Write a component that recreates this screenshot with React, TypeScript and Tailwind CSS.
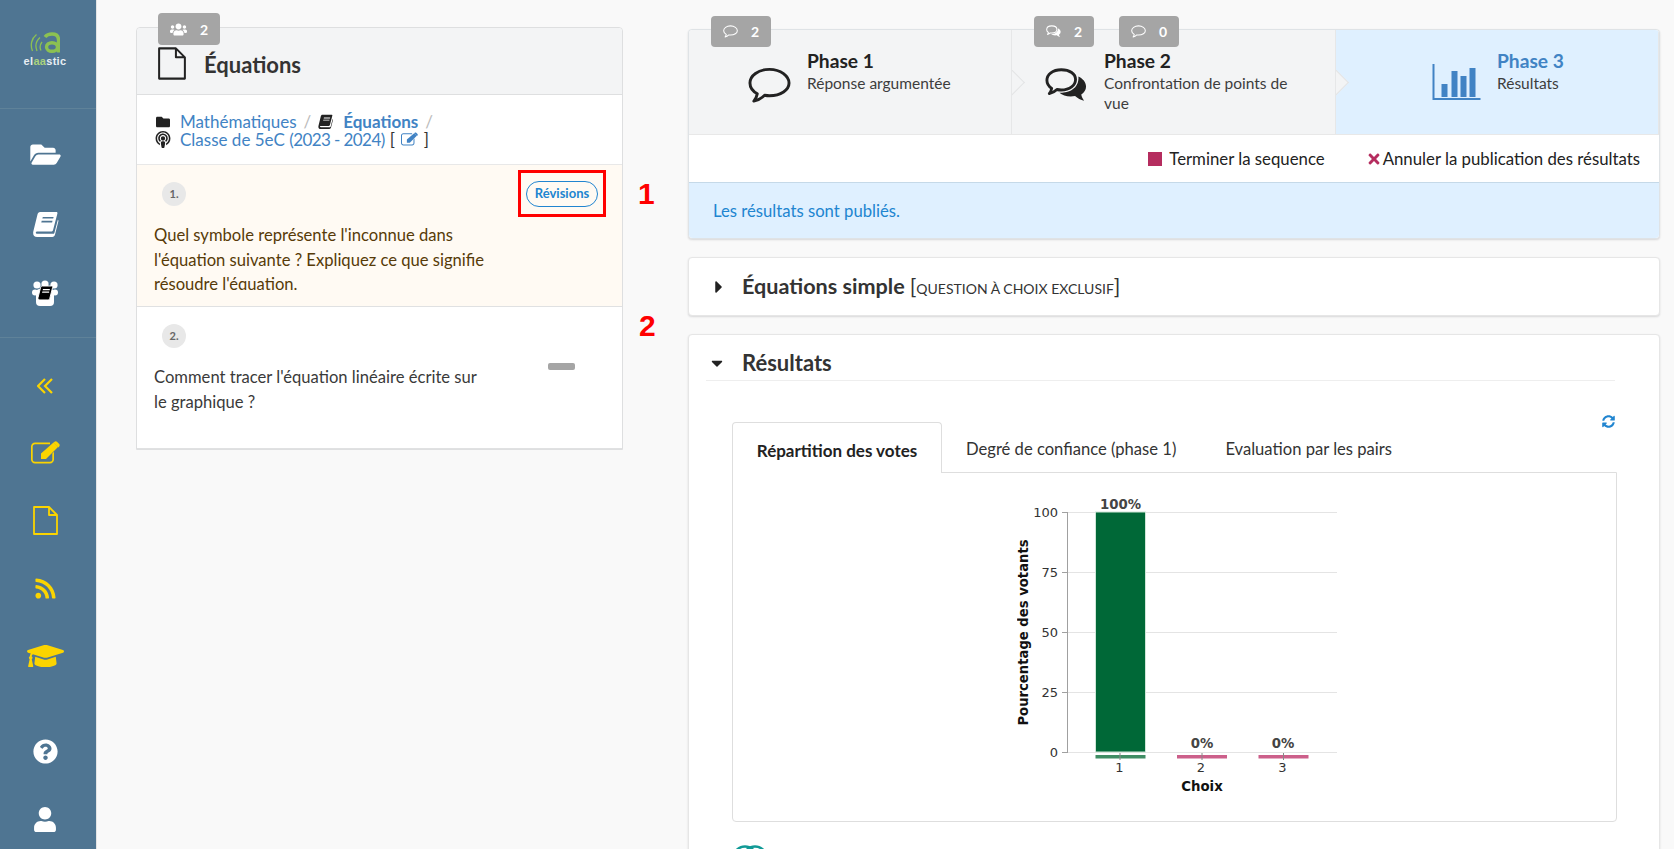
import React from 'react';
import {
  FaCaretDown,
  FaCaretRight,
  FaFolder,
  FaFolderOpen,
  FaGraduationCap,
  FaPodcast,
  FaQuestionCircle,
  FaRss,
  FaSyncAlt,
  FaTimes,
  FaUser,
  FaUsers,
} from 'react-icons/fa';

type IconProps = { className?: string };

const BookIcon = ({ className }: IconProps) => (
  <svg viewBox="0 0 24 24" className={className} fill="currentColor">
    <path d="M7 1h15c.8 0 1.200.6 1 1.300l-4 15.200c-.3 1-1 1.500-2 1.500H4.500c-1 0-1.600.6-1.400 1.200.2.500.8.800 1.600.8H19c.6 0 1-.3 1.200-.8L23.400 8l.6 1-3.200 12.700c-.3 1.200-1.200 2.300-2.600 2.300H4.200C2 24 .5 22.400.6 20.200c0-.6.1-1 .2-1.600L4.600 3.200C4.900 2 5.800 1 7 1zm2.500 4.500-.4 1.500h10l.4-1.500zm-1 3.500-.4 1.500h10l.4-1.500z" fillRule="evenodd" />
  </svg>
);

const FileIcon = ({ className }: IconProps) => (
  <svg viewBox="0 0 25 29" className={className} fill="none" stroke="currentColor" strokeWidth="1.800" strokeLinejoin="round">
    <path d="M1 1h15l8 8v19H1zM16 1v8h8" />
  </svg>
);

const EditIcon = ({ className }: IconProps) => (
  <svg viewBox="0 0 29 23" className={className} fill="currentColor">
    <path d="M4 1.500h15v1.700H4C2.700 3.200 1.700 4.200 1.700 5.500v13c0 1.300 1 2.300 2.300 2.300h15c1.300 0 2.300-1 2.300-2.300v-6l1.700-1.700v7.700c0 2.200-1.800 4-4 4H4c-2.200 0-4-1.800-4-4v-13c0-2.200 1.800-4 4-4z" />
    <path d="M10 12.500 22.500 1.500l4.500 4.500-12 12h-5z" />
    <path d="M23.500.8c.8-.7 1.800-.7 2.500 0l2.200 2.200c.7.700.7 1.700 0 2.400l-1 1-4.700-4.600z" />
  </svg>
);

const CommentIcon = ({ className }: IconProps) => (
  <svg viewBox="0 0 44 37" className={className} fill="none" stroke="currentColor" strokeWidth="3" strokeLinejoin="round">
    <path d="M22 2C10.400 2 2 8.500 2 16c0 4.500 3 8.500 7.500 11-.4 2.500-1.500 5-3.500 7.500 4-.8 8-3 11-6 1.600.3 3.300.5 5 .5 11.600 0 20-6 20-13S33.600 2 22 2z" />
  </svg>
);

const CommentsIcon = ({ className }: IconProps) => (
  <svg viewBox="0 0 44 37" className={className}>
    <path d="M17 2C8 2 2 7 2 13c0 3.500 2 6.500 5 8.500-.3 2-1 3.500-2.500 5.500 3-.6 6-2.300 8-4.300 1.400.3 3 .5 4.500.5 9 0 15-5 15-11S26 2 17 2z" fill="none" stroke="currentColor" strokeWidth="3" strokeLinejoin="round" />
    <path d="M35 9c4.500 2 8 6 8 10.500 0 3.500-2 6.500-5 8.500.3 2 1.200 4 3 6.500-3.500-.6-7-2.800-9.500-5-1.600.3-3 .5-4.500.5-5 0-9-1.500-12-4 8 .5 21-3 20-17z" fill="currentColor" />
  </svg>
);

const DoubleLeft = ({ className }: IconProps) => (
  <svg viewBox="0 0 16 16" className={className} fill="none" stroke="currentColor" strokeWidth="2.200">
    <path d="M8 1 1 8l7 7M15 1 8 8l7 7" />
  </svg>
);

const TeamIcon = () => (
  <svg viewBox="0 0 26 26" className="w-[26px] h-[26px]">
    <g fill="#fff">
      <circle cx="5" cy="5" r="3.600" />
      <circle cx="13" cy="4" r="3.600" />
      <circle cx="22" cy="5" r="3.600" />
      <rect x="0" y="9.500" width="6" height="6" rx="3" />
      <rect x="20" y="9.500" width="6" height="6" rx="3" />
      <rect x="4" y="9" width="18" height="17" rx="4" />
    </g>
    <g transform="translate(6 6) scale(0.62)">
      <path d="M7 0h15c1.500 0 2 1 1.600 2.300L19 20c-.4 1.500-1.500 2.500-3 2.500H3c-2 0-3.500-1.500-3-3.500L4 3C4.500 1.200 5.500 0 7 0z" fill="#000" stroke="#fff" strokeWidth="1.500" />
      <path d="M8 5h11v2H7.500zM7 9h11v2H6.500z" fill="#fff" />
    </g>
  </svg>
);

const Badge = ({ icon, count, className }: { icon: React.ReactNode; count: number; className: string }) => (
  <div className={`absolute z-10 rounded-[4px] bg-[#a5a5a5] text-white text-[14px] font-bold flex items-center justify-center gap-[13px] ${className}`}>
    {icon}
    <span>{count}</span>
  </div>
);

const NavItem = ({ children, h }: { children: React.ReactNode; h: string }) => (
  <div className={`flex items-center justify-center shrink-0 ${h}`}>{children}</div>
);

const Sidebar = () => (
  <div className="w-[97px] shrink-0 h-full bg-[#4f7592] border-r border-[#e4e4e4] flex flex-col overflow-hidden pr-[6px]">
    <div className="-mr-[6px] pr-[6px] h-[109px] shrink-0 border-b border-[#5f8299] flex flex-col items-center pt-[32px]">
      <svg viewBox="0 0 30 22" className="w-[30px] h-[22px]" fill="none" stroke="#8cc152">
        <path d="M7 19C5 14 6 9 10 5.500M2.500 19C0 13 1.500 6.500 6.500 2.500M11 18.500c-1.500-3-1-6 1-8.500" strokeWidth="1.300" />
        <path d="M15 5C16.500 3 18.500 2 22 2c4.500 0 6.500 2.500 6.500 6v12.500" strokeWidth="3.400" />
        <ellipse cx="22" cy="15" rx="5.500" ry="4.300" strokeWidth="3.400" />
      </svg>
      <div className="mt-[1px] text-[11px] font-bold leading-[12px] tracking-[0.3px] text-[#e8eef2] font-['Liberation_Sans',sans-serif]">
        el<span className="text-[#a9d27d]">aa</span>stic
      </div>
    </div>
    <div className="-mr-[6px] pr-[6px] h-[229px] shrink-0 border-b border-[#5f8299] flex flex-col pt-[20px] text-white">
      <NavItem h="h-[50px]"><FaFolderOpen className="w-[31px] h-[27px]" /></NavItem>
      <NavItem h="h-[89px]"><BookIcon className="w-[27px] h-[26px]" /></NavItem>
      <NavItem h="h-[50px]"><TeamIcon /></NavItem>
    </div>
    <div className="flex flex-col shrink-0 pt-[16px] text-[#fbd400]">
      <NavItem h="h-[64px]"><DoubleLeft className="w-[16px] h-[16px]" /></NavItem>
      <NavItem h="h-[68px]"><EditIcon className="w-[29px] h-[23px]" /></NavItem>
      <NavItem h="h-[68px]"><FileIcon className="w-[25px] h-[29px]" /></NavItem>
      <NavItem h="h-[68px]"><FaRss className="w-[23px] h-[23px]" /></NavItem>
      <NavItem h="h-[68px]"><FaGraduationCap className="w-[37px] h-[30px]" /></NavItem>
    </div>
    <div className="flex flex-col shrink-0 pt-[27px] text-white">
      <NavItem h="h-[68px]"><FaQuestionCircle className="w-[25px] h-[25px]" /></NavItem>
      <NavItem h="h-[68px]"><FaUser className="w-[22px] h-[25px]" /></NavItem>
    </div>
  </div>
);

const Question = ({ n, text, active }: { n: number; text: React.ReactNode; active?: boolean }) => (
  <div className={`h-[142px] border-b border-[#e0e1e2] pl-[17px] ${active ? 'bg-[#fffaf3] text-[#573a08]' : 'bg-white text-[#3a3a3a]'}`}>
    <div className="ml-[8px] pt-[17px]">
      <div className="w-[24px] h-[24px] rounded-full bg-[#e8e8e8] text-[#666] text-[11px] font-bold flex items-center justify-center">{n}.</div>
    </div>
    <div className="mt-[17px] w-[335px] h-[67px] overflow-hidden text-[16.600px] leading-[24.500px]">{text}</div>
  </div>
);

const LeftColumn = () => (
  <div className="relative w-[487px] shrink-0">
    <div className="relative rounded-t-[4px] border border-[#dedfe0] bg-white">
      <Badge icon={<FaUsers className="w-[17px] h-[15px]" />} count={2} className="left-[21px] top-[-15px] h-[32px] w-[62px]" />
      <div className="h-[67px] bg-[#f3f4f5] rounded-t-[4px] border-b border-[#dedfe0] flex items-center pl-[21px] pt-[4px]">
        <FileIcon className="w-[28px] h-[33px] text-[#222]" />
        <span className="ml-[18px] mt-[3px] text-[22px] font-bold text-[#333]">Équations</span>
      </div>
      <div className="h-[70px] border-b border-[#e8e8e8] pt-[18px] pl-[18px] text-[17px] leading-[17.500px] text-[#4183c4]">
        <div className="flex items-center">
          <FaFolder className="w-[16px] h-[14px] text-[#222] mr-[9px]" />
          <span>Mathématiques</span>
          <span className="text-[#bbb] mx-[7px]">/</span>
          <BookIcon className="w-[15px] h-[15px] text-[#222] mr-[10px]" />
          <span className="font-bold">Équations</span>
          <span className="text-[#bbb] ml-[7px]">/</span>
        </div>
        <div className="flex items-center">
          <FaPodcast className="w-[16px] h-[17px] text-[#222] mr-[9px]" />
          <span>Classe de 5eC <span className="tracking-[-0.58px]">(2023 - 2024)</span></span>
          <span className="text-[#333] ml-[5px]">[</span>
          <EditIcon className="w-[17px] h-[14px] mx-[6px]" />
          <span className="text-[#333]">]</span>
        </div>
      </div>
      <Question active n={1} text={<>Quel symbole représente l'inconnue dans l'équation suivante ? Expliquez ce que signifie résoudre l'équation.</>} />
      <Question n={2} text={<>Comment tracer l'équation linéaire écrite sur le graphique ?</>} />
      <div className="absolute left-[381px] top-[142px] w-[88px] h-[47px] border-[3px] border-[#ff0000] flex items-center justify-center">
        <div className="w-[72px] h-[26px] rounded-full border border-[#2185d0] text-[#2185d0] text-[13px] font-bold flex items-center justify-center">Révisions</div>
      </div>
      <div className="absolute left-[411px] top-[335px] w-[27px] h-[7px] rounded-[2px] bg-[#a5a5a5]" />
      <div className="absolute left-[501px] top-[151px] text-[#ff0000] text-[30px] leading-none font-bold font-['Liberation_Sans',sans-serif]">1</div>
      <div className="absolute left-[502px] top-[283px] text-[#ff0000] text-[30px] leading-none font-bold font-['Liberation_Sans',sans-serif]">2</div>
    </div>
  </div>
);

const Step = ({ title, sub, icon, active, w }: { title: string; sub: string; icon: React.ReactNode; active?: boolean; w: string }) => (
  <div className={`relative h-[104px] ${w} flex pt-[20px] border-r border-[#e6e7e8] ${active ? 'bg-[#dff0ff]' : 'bg-[#f3f4f5]'}`}>
    {icon}
    <div className="w-[190px]">
      <div className={`text-[19.200px] leading-[22px] font-bold ${active ? 'text-[#4183c4]' : 'text-[#222]'}`}>{title}</div>
      <div className="text-[15.500px] leading-[20px] mt-[1px] text-[#3d3d3d]">{sub}</div>
    </div>
  </div>
);

const Chevron = ({ className }: { className: string }) => (
  <div className={`absolute top-[39px] w-[14px] h-[27px] overflow-hidden ${className}`}>
    <div className="w-[19px] h-[19px] -ml-[10px] mt-[4px] rotate-45 bg-[#f3f4f5] border-t border-r border-[#e3e4e5]" />
  </div>
);

const Steps = () => (
  <div className="relative rounded-[4px] border border-[#dfe3e6] shadow-[0_1px_2px_rgba(34,36,38,0.15)] bg-white">
    <Badge icon={<CommentIcon className="w-[15px] h-[13px]" />} count={2} className="left-[22px] top-[-14px] h-[31px] w-[60px]" />
    <Badge icon={<CommentsIcon className="w-[15px] h-[13px]" />} count={2} className="left-[345px] top-[-14px] h-[31px] w-[60px]" />
    <Badge icon={<CommentIcon className="w-[15px] h-[13px]" />} count={0} className="left-[430px] top-[-14px] h-[31px] w-[60px]" />
    <div className="flex rounded-t-[4px] overflow-hidden">
      <Step w="w-[323px] shrink-0" title="Phase 1" sub="Réponse argumentée" icon={<CommentIcon className="w-[43px] h-[37px] ml-[59px] mr-[16px] mt-[17px] text-[#222] shrink-0" />} />
      <Step w="w-[324px] shrink-0" title="Phase 2" sub="Confrontation de points de vue" icon={<CommentsIcon className="w-[42px] h-[37px] ml-[33px] mr-[17px] mt-[17px] text-[#222] shrink-0" />} />
      <Step active w="flex-1 min-w-0" title="Phase 3" sub="Résultats" icon={
        <svg viewBox="0 0 48 36" className="w-[49px] h-[36px] ml-[96px] mr-[16px] mt-[14px] shrink-0 text-[#4183c4]" fill="currentColor">
          <path d="M0 0h2v34h46v2H0zM9 20h6v13H9zM19 7h6v26h-6zM28 12h6v21h-6zM37 4h6v29h-6z" />
        </svg>
      } />
    </div>
    <Chevron className="left-[323px]" />
    <Chevron className="left-[647px]" />
    <div className="h-[48px] border-t border-[#e8e8e8] flex items-center justify-end pr-[19px] text-[16.800px] text-[#222]">
      <div className="w-[14px] h-[14px] bg-[#b52d5f] mr-[7px]" />
      <span>Terminer la sequence</span>
      <FaTimes className="w-[14px] h-[16px] text-[#b52d5f] ml-[42px] mr-[2px]" />
      <span>Annuler la publication des résultats</span>
    </div>
    <div className="h-[56px] pt-[3px] border-t border-[#c5d9e8] bg-[#dff0ff] rounded-b-[4px] flex items-center pl-[24px] text-[16.700px] text-[#2185d0]">Les résultats sont publiés.</div>
  </div>
);

const Chart = () => (
  <svg viewBox="0 0 420 330" className="w-[420px] h-[330px] ml-[284px] mt-[17px] font-['DejaVu_Sans',sans-serif]">
    {[0, 60, 120, 180, 240].map((y) => (
      <line key={y} x1="50" x2="320" y1={y + 22.500} y2={y + 22.500} stroke="#e4e4e4" strokeWidth="1" />
    ))}
    <line x1="50.500" x2="50.500" y1="22" y2="263" stroke="#a0a0a0" />
    {[0, 60, 120, 180, 240].map((y, i) => (
      <g key={y}>
        <line x1="45" x2="50" y1={y + 22.500} y2={y + 22.500} stroke="#a0a0a0" />
        <text x="41" y={y + 27} textAnchor="end" fontSize="13" fill="#333">{[100, 75, 50, 25, 0][i]}</text>
      </g>
    ))}
    <rect x="78.500" y="22" width="50" height="240" fill="#006837" stroke="#cfe6d8" strokeWidth="1" />
    <rect x="78.500" y="265" width="50" height="3.500" fill="#3f8d64" />
    <rect x="160" y="265" width="50" height="3.500" fill="#cc5f8a" />
    <rect x="241.500" y="265" width="50" height="3.500" fill="#cc5f8a" />
    <line x1="103" x2="103" y1="263" y2="270" stroke="#888" />
    <line x1="185" x2="185" y1="263" y2="270" stroke="#888" />
    <line x1="266.500" x2="266.500" y1="263" y2="270" stroke="#888" />
    <text x="103.500" y="19" textAnchor="middle" fontSize="13.300" fontWeight="bold" fill="#444">100%</text>
    <text x="185" y="258" textAnchor="middle" fontSize="13.300" fontWeight="bold" fill="#444">0%</text>
    <text x="266" y="258" textAnchor="middle" fontSize="13.300" fontWeight="bold" fill="#444">0%</text>
    <text x="102.500" y="282" textAnchor="middle" fontSize="13" fill="#333">1</text>
    <text x="184" y="282" textAnchor="middle" fontSize="13" fill="#333">2</text>
    <text x="265.500" y="282" textAnchor="middle" fontSize="13" fill="#333">3</text>
    <text x="185" y="301" textAnchor="middle" fontSize="13.300" fontWeight="bold" fill="#111">Choix</text>
    <text transform="translate(11 142.500) rotate(-90)" textAnchor="middle" fontSize="13.200" fontWeight="bold" fill="#111">Pourcentage des votants</text>
  </svg>
);

const Results = () => (
  <div className="relative rounded-[4px] bg-white border border-[#e6e6e6] shadow-[0_1px_2px_rgba(34,36,38,0.15)] pt-[10px] h-[560px]">
    <div className="ml-[17px] mr-[44px] h-[36px] border-b border-[#eeeeee] flex items-center">
      <FaCaretDown className="w-[18px] h-[18px] text-[#222] ml-[2px]" />
      <span className="ml-[16px] text-[22px] font-bold text-[#333]">Résultats</span>
    </div>
    <FaSyncAlt className="absolute right-[44px] top-[80px] w-[13px] h-[13px] text-[#2185d0]" />
    <div className="ml-[43px] mr-[42px] mt-[41px] flex items-end relative z-10 h-[50px]">
      <div className="h-[51px] w-[210px] -mb-[1px] pt-[5px] bg-white border border-[#dedede] border-b-0 rounded-t-[4px] flex items-center justify-center text-[17px] font-bold text-[#222]">Répartition des votes</div>
      <div className="h-[50px] pt-[5px] flex items-center ml-[24px] text-[16.600px] text-[#333]">Degré de confiance (phase 1)</div>
      <div className="h-[50px] pt-[5px] flex items-center ml-[49px] text-[16.600px] text-[#333]">Evaluation par les pairs</div>
    </div>
    <div className="ml-[43px] mr-[42px] h-[350px] border border-[#dedede] rounded-b-[4px]">
      <Chart />
    </div>
    <svg viewBox="0 0 34 10" className="ml-[44px] mt-[23px] w-[34px] h-[10px]" fill="none" stroke="#109a96" strokeWidth="2.500">
      <ellipse cx="12" cy="11" rx="10.500" ry="9.500" />
      <ellipse cx="22" cy="11" rx="10.500" ry="9.500" />
    </svg>
  </div>
);

const RightColumn = () => (
  <div className="ml-[65px] w-[972px] shrink-0 flex flex-col">
    <div className="pt-[2px] shrink-0"><Steps /></div>
    <div className="mt-[18px] shrink-0 h-[59px] rounded-[4px] bg-white border border-[#e6e6e6] shadow-[0_1px_2px_rgba(34,36,38,0.15)] flex items-center pl-[24px]">
      <FaCaretRight className="w-[16px] h-[20px] text-[#222] -ml-[2px] -mr-[2px]" />
      <span className="ml-[17px] text-[21.600px] font-bold text-[#333]">Équations simple</span>
      <span className="ml-[5px] text-[21.600px] text-[#333]">[</span>
      <span className="text-[14px] text-[#333] mt-[3px] uppercase">Question à choix exclusif</span>
      <span className="text-[21.600px] text-[#333]">]</span>
    </div>
    <div className="mt-[18px] shrink-0"><Results /></div>
  </div>
);

export default function App() {
  return (
    <div className="h-[849px] w-[1674px] overflow-hidden flex bg-[#f9f9f9] font-['Lato',sans-serif]">
      <Sidebar />
      <div className="flex pl-[39px] pt-[27px]">
        <LeftColumn />
        <RightColumn />
      </div>
    </div>
  );
}
